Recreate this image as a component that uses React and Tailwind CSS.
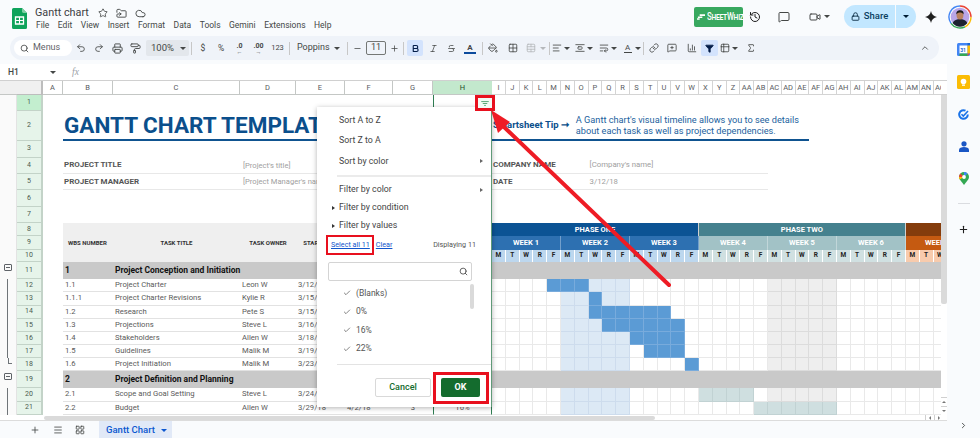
import React from 'react';
import {
  Star, Cloud, History, MessageSquare, Video, Lock, Search, Undo2, Redo2, Printer, PaintRoller, Italic, Strikethrough,
  PaintBucket, Grid2x2, TableCellsMerge, AlignLeft, Link, MessageSquarePlus, ChartColumn, Sigma, ChevronUp, ChevronRight,
  Plus, Menu, Minus, FolderSymlink, Check, WrapText, AlignVerticalSpaceAround, Funnel, Table2, LayoutGrid, Bold,
} from 'lucide-react';

const GRID = 'grid grid-cols-[17px_26px_20px_50px_127px_56px_49px_48px_40px_59px_repeat(33,13.8px)]';

const Caret = ({ c = 'border-t-[#444746]' }) => (
  <span className={`inline-block h-0 w-0 border-x-[3px] border-t-[3px] border-x-transparent ${c}`} />
);

const T = ({ children, w = 'w-[18px]', cls = '' }) => (
  <span className={`flex h-4 shrink-0 items-center justify-center text-[#444746] ${w} ${cls}`}>{children}</span>
);

const Sep = ({ cls = '' }) => <span className={`h-[13px] w-px shrink-0 bg-[#c7c7c7] ${cls}`} />;

function SheetsLogo() {
  return (
    <svg width="15" height="21" viewBox="0 0 15 21">
      <path d="M1.5 0H10l5 5v14.5a1.5 1.5 0 0 1-1.5 1.5h-12A1.5 1.5 0 0 1 0 19.5v-18A1.5 1.5 0 0 1 1.5 0z" fill="#0fa35b" />
      <path d="M10 0l5 5h-3.6A1.4 1.4 0 0 1 10 3.6z" fill="#7fd0a3" />
      <path d="M3.5 9h8v7h-8z" fill="none" stroke="#fff" strokeWidth="1.3" />
      <path d="M3.5 12.5h8M7.5 9v7" stroke="#fff" strokeWidth="1.1" />
    </svg>
  );
}

function Avatar() {
  return (
    <svg width="24" height="24" viewBox="0 0 24 24">
      <path d="M12 1a11 11 0 0 1 11 11" fill="none" stroke="#ea4335" strokeWidth="1.4" />
      <path d="M23 12a11 11 0 0 1-6 9.8" fill="none" stroke="#fbbc04" strokeWidth="1.4" />
      <path d="M17 21.8A11 11 0 0 1 3 18.3" fill="none" stroke="#34a853" strokeWidth="1.4" />
      <path d="M3 18.3A11 11 0 0 1 12 1" fill="none" stroke="#4285f4" strokeWidth="1.4" />
      <circle cx="12" cy="12" r="9.3" fill="#b9a6e8" />
      <path d="M4.6 18c1.6-3 4.2-4 7.4-4s5.8 1 7.4 4a9.3 9.3 0 0 1-14.8 0z" fill="#1d2230" />
      <ellipse cx="12" cy="10.5" rx="3.4" ry="4.1" fill="#b9825f" />
      <path d="M8.4 9.5C8 6.5 10 5.3 12.2 5.3c2.3 0 3.8 1.3 3.4 4.2-.9-1.5-2.2-1.9-3.6-1.9-1.400 0-2.800.5-3.600 1.900z" fill="#1b1b1b" />
    </svg>
  );
}

const TitleBar = () => (
  <div className="flex h-[36px] shrink-0 items-start">
    <div className="ml-[12px] mt-[8px]"><SheetsLogo /></div>
    <div className="ml-[8px] mt-[6px] flex flex-col">
      <div className="flex h-[14px] items-center">
        <span className="w-[63px] whitespace-nowrap text-[10.800px] leading-none text-[#3c4043]">Gantt chart</span>
        <Star size={10} className="text-[#444746]" />
        <FolderSymlink size={11} className="ml-[8px] text-[#444746]" />
        <Cloud size={11} className="ml-[8px] text-[#444746]" />
      </div>
      <div className="flex h-[11px] items-center gap-[8.5px] pl-px text-[8.500px] leading-none text-[#444746]">
        {['File', 'Edit', 'View', 'Insert', 'Format', 'Data', 'Tools', 'Gemini', 'Extensions', 'Help'].map((m) => (
          <span key={m}>{m}</span>
        ))}
      </div>
    </div>
    <div className="ml-auto mt-[5px] flex h-[23px] items-center pr-[8px]">
      <div className="flex h-[20px] w-[49px] items-center gap-[2px] overflow-hidden rounded-[2px] bg-[#38a85f] pl-[3px]">
        <svg className="shrink-0" width="8" height="6" viewBox="0 0 9 6"><path d="M3 0h6v2H3zM1 2.500h5v1.500H1zM0 4.500h3V6H0z" fill="#fff" /></svg>
        <span className="inline-block w-[33px] origin-left scale-x-[0.78] whitespace-nowrap text-[10px] font-medium leading-none tracking-[-0.3px] text-white [font-variant:small-caps]">SheetWhiz</span>
      </div>
      <History size={12} strokeWidth={2} className="ml-[6px] text-[#1f1f1f]" />
      <MessageSquare size={12} strokeWidth={2} className="ml-[17px] text-[#444746]" />
      <Video size={12} strokeWidth={2} className="ml-[19px] text-[#444746]" />
      <span className="ml-[3px] flex"><Caret /></span>
      <div className="ml-[14px] flex h-[23px] w-[72px] items-center rounded-full bg-[#c2e7ff]">
        <div className="flex h-full w-[52px] items-center justify-center gap-[4px] border-r border-[#f9fbfd] text-[9.500px] font-medium text-[#0b3f5f]">
          <Lock size={9} strokeWidth={2.400} className="text-[#0b2e45]" />
          <span>Share</span>
        </div>
        <span className="ml-[7px] flex"><Caret c="border-t-[#001d35]" /></span>
      </div>
      <svg width="12" height="12" viewBox="0 0 12 12" className="ml-[9px]"><path d="M6 0c.5 3.200 2.800 5.500 6 6-3.200.5-5.500 2.800-6 6-.5-3.200-2.800-5.500-6-6 3.200-.5 5.500-2.800 6-6z" fill="#1f1f1f" /></svg>
      <span className="ml-[11px] flex"><Avatar /></span>
    </div>
  </div>
);

const Toolbar = () => (
  <div className="ml-[10px] flex h-[24px] w-[929px] shrink-0 items-center rounded-full bg-[#eff3f9] pl-[4px] text-[8.500px] text-[#444746]">
    <div className="flex h-4 w-[58px] shrink-0 items-center gap-[4px] rounded-full bg-white pl-[6px] text-[9px] text-[#5f6368]">
      <Search size={9} strokeWidth={2.200} className="text-[#444746]" />
      <span>Menus</span>
    </div>
    <T><Undo2 size={10} /></T>
    <T><Redo2 size={10} /></T>
    <T><Printer size={11} /></T>
    <T><PaintRoller size={11} /></T>
    <div className="ml-[2px] flex h-4 w-[43px] shrink-0 items-center gap-[6px] rounded-[2px] bg-[#e3e7ec] pl-[5px] text-[9.500px]">
      <span>100%</span><Caret />
    </div>
    <Sep cls="ml-[2px]" />
    <T cls="ml-[2px]">$</T>
    <T>%</T>
    <T w="w-[19px]"><span className="flex flex-col items-center text-[7px] font-bold leading-[7px]">.0<span className="text-[6px] leading-[3px]">←</span></span></T>
    <T w="w-[19px]"><span className="flex flex-col items-center text-[7px] font-bold leading-[7px]">.00<span className="text-[6px] leading-[3px]">→</span></span></T>
    <T w="w-[19px]"><span className="text-[7.500px]">123</span></T>
    <Sep cls="ml-[2px]" />
    <span className="ml-[7px] w-[37px] shrink-0 text-[9px]">Poppins</span>
    <Caret />
    <Sep cls="ml-[7px]" />
    <T><Minus size={9} /></T>
    <span className="flex h-[14px] w-[20px] shrink-0 items-center justify-center rounded-[2px] border border-[#747775] text-[9px]">11</span>
    <T w="w-[17px]"><Plus size={9} /></T>
    <Sep />
    <span className="ml-[3px] flex h-4 w-[16px] shrink-0 items-center justify-center rounded-[2px] bg-[#d3e3fd] text-[#041e49]"><Bold size={9} strokeWidth={3} /></span>
    <T cls="ml-[1px]"><Italic size={9} /></T>
    <T><Strikethrough size={9} /></T>
    <T cls="ml-[1px]"><span className="flex flex-col items-center text-[8px] font-bold leading-[9px]">A<span className="block h-[2px] w-[12px] bg-[#0b4a9c]" /></span></T>
    <Sep cls="ml-[3px]" />
    <T cls="ml-[1px]"><PaintBucket size={10} /></T>
    <T cls="ml-[2px]"><Grid2x2 size={10} /></T>
    <T><TableCellsMerge size={10} className="text-[#b5b8bb]" /></T>
    <Caret c="border-t-[#b5b8bb]" />
    <Sep cls="ml-[3px]" />
    <T w="w-[14px]"><AlignLeft size={10} /></T>
    <Caret />
    <T w="w-[15px]" cls="ml-[2px]"><AlignVerticalSpaceAround size={10} /></T>
    <Caret />
    <T w="w-[15px]" cls="ml-[3px]"><WrapText size={10} /></T>
    <Caret />
    <T w="w-[15px]" cls="ml-[3px]"><span className="flex flex-col items-center text-[8px] leading-[8px]">A<span className="block h-px w-[8px] bg-[#444746]" /></span></T>
    <Caret />
    <Sep cls="ml-[2px]" />
    <T cls="ml-[1px]"><Link size={10} /></T>
    <T><MessageSquarePlus size={10} /></T>
    <T cls="ml-[2px]"><ChartColumn size={10} /></T>
    <span className="flex h-4 w-[17px] shrink-0 items-center justify-center rounded-[2px] bg-[#d3e3fd]"><Funnel size={9} fill="#041e49" className="text-[#041e49]" /></span>
    <T w="w-[14px]"><Table2 size={10} /></T>
    <Caret />
    <T w="w-[16px]" cls="ml-[5px]"><Sigma size={10} /></T>
    <T cls="ml-[157px]"><ChevronUp size={10} /></T>
  </div>
);

const FormulaBar = () => (
  <div className="mt-[4px] flex h-[17px] shrink-0 items-center border-b border-[#d0d0d0] bg-white text-[8.500px] text-[#444746]">
    <span className="ml-[8px] w-[42px] font-medium">H1</span>
    <Caret />
    <span className="ml-[16px] text-[9.500px] italic text-[#9aa0a6] [font-family:'Liberation_Serif',serif]">fx</span>
  </div>
);

const LETTERS = ['I','J','K','L','M','N','O','P','Q','R','S','T','U','V','W','X','Y','Z','AA','AB','AC','AD','AE','AF','AG','AH','AI','AJ','AK','AL','AM','AN','AO'];

const ColHeader = () => (
  <div className={`${GRID} h-[14px] bg-[#f8f9fa] text-[7.500px] leading-none text-[#575a5e]`}>
    <div className="border-b border-[#c4c7c5] bg-[#f0f0f0]" />
    <div className="border-b border-r-[2px] border-[#bdbdbd] bg-[#f0f0f0]" />
    {['A', 'B', 'C', 'D', 'E', 'F', 'G'].map((l) => (
      <div key={l} className="flex items-center justify-center border-b border-r border-[#c4c7c5] bg-white">{l}</div>
    ))}
    <div className="flex items-center justify-center border-b border-[#c4c7c5] bg-[#c3e8cd] text-[#1e4d2b]">H</div>
    {LETTERS.map((l) => (
      <div key={l} className="flex items-center justify-center overflow-hidden border-b border-r border-[#d4d4d4] bg-white">{l}</div>
    ))}
  </div>
);

const Gutter = ({ kind }) => (
  <div className="flex justify-center border-r border-[#e3e3e3] bg-[#fafafa]">
    {kind === 'box' && <span className="mt-[2px] flex h-[7px] w-[8px] items-center justify-center rounded-[1px] border border-[#5f6368]"><span className="h-px w-[4px] bg-[#5f6368]" /></span>}
    {kind === 'line' && <span className="ml-[-1px] h-full w-px bg-[#6f7478]" />}
    {kind === 'end' && <span className="ml-[3px] h-[6px] w-[4px] border-b border-l border-[#6f7478]" />}
  </div>
);

const RowHead = ({ n, sel }) => (
  <div className={`flex items-center justify-center border-b border-r-[2px] border-[#c3d3c8] text-[7px] leading-none text-[#4a5a4f] ${sel ? 'bg-[#c3eecf]' : 'bg-[#e6f4ea]'}`}>{n}</div>
);

const HCell = ({ children, cls = '' }) => (
  <div className={`flex items-center justify-center border-x border-[#2f7d52] ${cls}`}>{children}</div>
);

const Blank = ({ span = 'col-span-33' }) => <div className={`${span} bg-white`} />;

const Row1 = () => (
  <div className={`${GRID} h-[16px]`}>
    <Gutter /><RowHead n={1} sel />
    <div className="col-span-7 bg-white" />
    <HCell cls="bg-white" />
    <Blank />
  </div>
);

const Row2 = () => (
  <div className={`${GRID} h-[30px]`}>
    <Gutter /><RowHead n={2} />
    <div className="bg-white" />
    <div className="col-span-7 flex items-center overflow-hidden whitespace-nowrap border-b-[2px] border-[#0f5390] bg-white pl-px text-[22.500px] font-bold leading-none text-[#0b4f8c]">GANTT CHART TEMPLATE</div>
    <div className="col-span-6 flex items-center whitespace-nowrap border-b-[2px] border-[#0f5390] bg-white pl-px text-[9.500px] font-bold text-[#0b4f8c]">Smartsheet Tip ➞</div>
    <div className="col-span-17 flex flex-col justify-center whitespace-nowrap border-b-[2px] border-[#0f5390] bg-white pl-px text-[9.200px] leading-[11px] text-[#1c5f9e]">
      <span>A Gantt chart's visual timeline allows you to see details</span>
      <span>about each task as well as project dependencies.</span>
    </div>
    <Blank span="col-span-10" />
  </div>
);

const Plain = ({ n, h }) => (
  <div className={`${GRID} ${h}`}>
    <Gutter /><RowHead n={n} />
    <div className="col-span-8 bg-white" />
    <Blank />
  </div>
);

const Info = ({ n, h, a, b, c, d }) => (
  <div className={`${GRID} ${h}`}>
    <Gutter /><RowHead n={n} />
    <div className="bg-white" />
    <div className="col-span-2 flex items-center whitespace-nowrap border-b border-[#e8e8e8] bg-white pl-px text-[8px] font-bold text-[#555]">{a}</div>
    <div className="col-span-5 flex items-center whitespace-nowrap border-b border-[#e8e8e8] bg-white pl-[3px] text-[7.600px] text-[#a0a0a0]">{b}</div>
    <div className="col-span-7 flex items-center whitespace-nowrap border-b border-[#e8e8e8] bg-white pl-px text-[8px] font-bold text-[#555]">{c}</div>
    <div className="col-span-13 flex items-center whitespace-nowrap border-b border-[#e8e8e8] bg-white pl-px text-[7.800px] text-[#a0a0a0]">{d}</div>
    <Blank span="col-span-13" />
  </div>
);

const PhaseRow = () => (
  <div className={`${GRID} h-[13px]`}>
    <Gutter /><RowHead n={8} />
    <div className="bg-white" />
    <div className="col-span-7 bg-[#efefef]" />
    <div className="col-span-15 flex items-center justify-center border-r border-[#d0d0d0] bg-[#0b5394] text-[7.500px] font-bold text-white">PHASE ONE</div>
    <div className="col-span-15 flex items-center justify-center border-r border-[#d0d0d0] bg-[#45818e] text-[7.500px] font-bold text-white">PHASE TWO</div>
    <div className="col-span-3 bg-[#843c0c]" />
  </div>
);

const WeekCell = ({ children, cls }) => (
  <div className={`col-span-5 flex items-center justify-center overflow-hidden whitespace-nowrap border-r border-[#ffffff55] text-[7.500px] font-bold text-white ${cls}`}>{children}</div>
);

const WeekRow = () => (
  <div className={`${GRID} h-[13.500px]`}>
    <Gutter /><RowHead n={9} />
    <div className="bg-white" />
    <div className="flex items-center whitespace-nowrap bg-[#efefef] pl-[5px] text-[6px] font-bold text-[#333]">WBS NUMBER</div>
    <div className="flex items-center justify-center bg-[#efefef] text-[6px] font-bold text-[#333]">TASK TITLE</div>
    <div className="flex items-center justify-center whitespace-nowrap bg-[#efefef] text-[6px] font-bold text-[#333]">TASK OWNER</div>
    <div className="flex items-center justify-center whitespace-nowrap bg-[#efefef] text-[6px] font-bold text-[#333]">START DATE</div>
    <div className="col-span-3 bg-[#efefef]" />
    {['WEEK 1', 'WEEK 2', 'WEEK 3'].map((w) => <WeekCell key={w} cls="bg-[#2d70b1]">{w}</WeekCell>)}
    {['WEEK 4', 'WEEK 5', 'WEEK 6'].map((w) => <WeekCell key={w} cls="bg-[#a2c2c6]">{w}</WeekCell>)}
    <div className="col-span-3 flex items-center overflow-hidden whitespace-nowrap bg-[#c55a11] pl-[19px] text-[7.500px] font-bold text-white">WEEK 7</div>
  </div>
);

const DAYS = ['M', 'T', 'W', 'R', 'F'];

const DayRow = () => (
  <div className={`${GRID} h-[12.500px]`}>
    <Gutter /><RowHead n={10} />
    <div className="bg-white" />
    <div className="col-span-7 bg-[#efefef]" />
    {Array.from({ length: 33 }, (_, i) => (
      <div
        key={i}
        className={`flex items-center justify-center border-r border-white text-[6.500px] font-bold text-[#222] ${i < 15 ? 'bg-[#bdd7ee]' : i < 30 ? 'bg-[#d0e0e1]' : 'bg-[#f8cbad]'}`}
      >
        {DAYS[i % 5]}
      </div>
    ))}
  </div>
);

const Section = ({ n, h, gut, a, b }) => (
  <div className={`${GRID} ${h}`}>
    <Gutter kind={gut} /><RowHead n={n} />
    <div className="bg-white" />
    <div className="flex items-center bg-[#c9c9c9] pl-[2px] text-[8.500px] font-bold text-[#111]">{a}</div>
    <div className="col-span-39 flex items-center whitespace-nowrap bg-[#c9c9c9] pl-[2px] text-[8.500px] font-bold text-[#111]">{b}</div>
  </div>
);

const CELL = {
  w: 'bg-white border-[#e9e9e9]',
  d: 'bg-[#5b9bd5] border-[#78abdc]',
  l: 'bg-[#dce9f5] border-[#cddced]',
  g: 'bg-[#eeeeee] border-[#dcdcdc]',
  t: 'bg-[#cfdfe0] border-[#c1d2d3]',
};

function paint(spec) {
  const out = Array(33).fill('w');
  Object.entries(spec).forEach(([k, ranges]) => {
    ranges.forEach(([a, b]) => {
      for (let i = a; i <= b; i += 1) out[i] = k;
    });
  });
  return out;
}

const Task = ({ n, h, gut, a, b, c, d, e, f, g, spec }) => (
  <div className={`${GRID} ${h}`}>
    <Gutter kind={gut} /><RowHead n={n} />
    <div className="bg-white" />
    {[a, b, c, d, e].map((t, i) => (
      <div key={i} className="flex items-center overflow-hidden whitespace-nowrap border-b-[1.500px] border-[#e2e2e2] bg-white pl-[2px] text-[7.700px] text-[#5a5a5a]">{t}</div>
    ))}
    <div className="flex items-center justify-center border-b-[1.500px] border-[#e2e2e2] bg-white text-[7.700px] text-[#5a5a5a]">{f}</div>
    <HCell cls="border-b-[1.500px] border-b-[#e2e2e2] bg-white text-[7.700px] text-[#5a5a5a]">{g}</HCell>
    {paint(spec).map((k, i) => (
      <div key={i} className={`border-b-[1.500px] border-r-[1.500px] ${CELL[k]}`} />
    ))}
  </div>
);

const Sheet = () => (
  <div className="flex flex-col">
    <ColHeader />
    <Row1 />
    <Row2 />
    <Plain n={3} h="h-[16.500px]" />
    <Info n={4} h="h-[16.500px]" a="PROJECT TITLE" b="[Project's title]" c="COMPANY NAME" d="[Company's name]" />
    <Info n={5} h="h-[16px]" a="PROJECT MANAGER" b="[Project Manager's name]" c="DATE" d="3/12/18" />
    <Plain n={6} h="h-[17px]" />
    <Plain n={7} h="h-[16px]" />
    <PhaseRow />
    <WeekRow />
    <DayRow />
    <Section n={11} h="h-[17px]" gut="box" a="1" b="Project Conception and Initiation" />
    <Task n={12} h="h-[13px]" gut="line" a="1.1" b="Project Charter" c="Leon W" d="3/12/18" spec={{ d: [[4, 6]], l: [[7, 9]], g: [[20, 24]] }} />
    <Task n={13} h="h-[13.500px]" gut="line" a="1.1.1" b="Project Charter Revisions" c="Kylie R" d="3/15/18" spec={{ l: [[5, 6], [8, 9]], d: [[7, 7]], g: [[20, 24]] }} />
    <Task n={14} h="h-[13.500px]" gut="line" a="1.2" b="Research" c="Pete S" d="3/15/18" spec={{ l: [[5, 6]], d: [[7, 12]], g: [[20, 24]] }} />
    <Task n={15} h="h-[13px]" gut="line" a="1.3" b="Projections" c="Steve L" d="3/16/18" spec={{ l: [[5, 7]], d: [[8, 13]], g: [[20, 24]] }} />
    <Task n={16} h="h-[13px]" gut="line" a="1.4" b="Stakeholders" c="Allen W" d="3/18/18" spec={{ l: [[5, 9]], d: [[10, 13]], g: [[20, 24]] }} />
    <Task n={17} h="h-[13px]" gut="line" a="1.5" b="Guidelines" c="Malik M" d="3/19/18" spec={{ l: [[5, 9]], d: [[11, 13]], g: [[20, 24]] }} />
    <Task n={18} h="h-[13px]" gut="end" a="1.6" b="Project Initiation" c="Malik M" d="3/23/18" spec={{ l: [[5, 9]], d: [[14, 14]], g: [[20, 24]] }} />
    <Section n={19} h="h-[17px]" gut="box" a="2" b="Project Definition and Planning" />
    <Task n={20} h="h-[13.500px]" gut="line" a="2.1" b="Scope and Goal Setting" c="Steve L" d="3/24/18" spec={{ l: [[5, 9]], t: [[15, 18]], g: [[20, 24]] }} />
    <Task n={21} h="h-[13px]" gut="line" a="2.2" b="Budget" c="Allen W" d="3/29/18" e="4/2/18" f="3" g="16%" spec={{ l: [[5, 9]], t: [[19, 24]] }} />
  </div>
);

const VScroll = () => (
  <div className="flex w-[6px] shrink-0 flex-col bg-white">
    <div className="h-[14px] border-b border-[#d0d0d0]" />
    <div className="h-[209px] rounded-b-[2px] bg-[#dadada]" />
    <div className="flex-1" />
    <div className="flex h-[9px] items-center justify-center border-t border-[#d0d0d0]"><span className="h-0 w-0 border-x-2 border-b-2 border-x-transparent border-b-[#777]" /></div>
    <div className="flex h-[9px] items-center justify-center border-t border-[#d0d0d0]"><span className="h-0 w-0 border-x-2 border-t-2 border-x-transparent border-t-[#777]" /></div>
  </div>
);

const HScroll = () => (
  <div className="flex h-[6px] shrink-0 items-center border-b border-[#dcdcdc] bg-white">
    <div className="ml-[44px] h-[4px] w-[611px] rounded-full bg-[#dadada]" />
    <span className="ml-[270px] flex h-full w-[9px] items-center justify-center border-l border-[#d0d0d0]"><span className="h-0 w-0 border-y-2 border-r-2 border-y-transparent border-r-[#777]" /></span>
    <span className="flex h-full w-[9px] items-center justify-center border-l border-[#d0d0d0]"><span className="h-0 w-0 border-y-2 border-l-2 border-y-transparent border-l-[#777]" /></span>
  </div>
);

const TabBar = () => (
  <div className="flex h-[18px] shrink-0 items-center text-[#444746]">
    <Plus size={10} className="ml-[30px]" />
    <Menu size={10} className="ml-[13px]" />
    <LayoutGrid size={10} className="ml-[12px]" />
    <div className="ml-[14px] flex h-full w-[73px] items-center gap-[6px] bg-[#e1e9f7] pl-[7px] text-[9.500px] font-medium text-[#0b57d0]">
      <span className="whitespace-nowrap">Gantt Chart</span><Caret c="border-t-[#0b57d0]" />
    </div>
  </div>
);

const Sidebar = () => (
  <div className="flex w-[33px] shrink-0 flex-col items-center pt-[6px]">
    <svg width="13" height="13" viewBox="0 0 13 13" className="mt-[1px]">
      <rect width="13" height="13" rx="1.500" fill="#4285f4" />
      <rect x="2.500" y="2.500" width="8" height="8" fill="#fff" />
      <path d="M10.500 0H13v2.500h-2.500z" fill="#1967d2" />
      <path d="M10.500 2.500H13v8h-2.500z" fill="#fbbc04" />
      <path d="M2.500 10.500h8V13h-8z" fill="#34a853" />
      <path d="M10.500 10.500H13L10.500 13z" fill="#ea4335" />
      <text x="3.200" y="9" fontSize="5" fill="#1967d2" fontWeight="700">31</text>
    </svg>
    <svg width="13" height="14" viewBox="0 0 13 14" className="mt-[19px]">
      <rect width="13" height="14" rx="1.500" fill="#fbbc04" />
      <circle cx="6.500" cy="6.500" r="2.800" fill="#fff" />
      <rect x="5" y="9.500" width="3" height="1.300" fill="#fff" />
    </svg>
    <svg width="11" height="11" viewBox="0 0 11 11" className="mt-[20px]">
      <path d="M9.800 5.500A4.300 4.300 0 1 1 7.500 1.700" fill="none" stroke="#1a73e8" strokeWidth="2" />
      <path d="M3.500 5.300l1.800 1.800L10 2" fill="none" stroke="#1a73e8" strokeWidth="1.600" />
    </svg>
    <svg width="10" height="11" viewBox="0 0 10 11" className="mt-[21px]">
      <circle cx="5" cy="2.800" r="2.600" fill="#1a56c4" />
      <path d="M0 11V9c0-2 2.500-2.900 5-2.900S10 7 10 9v2z" fill="#1a56c4" />
    </svg>
    <svg width="10" height="13" viewBox="0 0 10 13" className="mt-[20px]">
      <path d="M5 0a5 5 0 0 1 5 5c0 1-.3 1.800-.8 2.600L5 13 .8 7.600A4.700 4.700 0 0 1 0 5a5 5 0 0 1 5-5z" fill="#34a853" />
      <path d="M5 0a5 5 0 0 1 3.500 1.400L5 5z" fill="#4285f4" />
      <path d="M0 5a5 5 0 0 1 1.500-3.500L5 5z" fill="#ea4335" />
      <path d="M0 5l5 0-4.200 2.600A4.700 4.700 0 0 1 0 5z" fill="#fbbc04" />
      <circle cx="5" cy="5" r="1.900" fill="#fff" />
    </svg>
    <div className="mt-[18px] h-px w-[12px] bg-[#dadce0]" />
    <Plus size={11} strokeWidth={2.400} className="mt-[20px] text-[#1f1f1f]" />
    <ChevronRight size={9} strokeWidth={2.400} className="mt-auto mb-[8px] text-[#444746]" />
  </div>
);

const Item = ({ h, label, arrow, tri }) => (
  <div className={`flex items-center pl-[22px] pr-[8px] text-[8.800px] text-[#444] ${h}`}>
    {tri && <span className="ml-[-7px] mr-[4px] h-0 w-0 border-y-[2.500px] border-l-[3px] border-y-transparent border-l-[#333]" />}
    <span>{label}</span>
    {arrow && <span className="ml-auto h-0 w-0 border-y-[2.500px] border-l-[3.500px] border-y-transparent border-l-[#666]" />}
  </div>
);

const Val = ({ label }) => (
  <div className="flex h-[18.500px] items-center pl-[26px] text-[8.500px] text-[#555]">
    <Check size={8} strokeWidth={1.800} className="text-[#333]" />
    <span className="ml-[5px]">{label}</span>
  </div>
);

const FilterMenu = () => (
  <div className="absolute left-[317px] top-[107px] flex h-[300px] w-[175px] flex-col border-r border-[#5f9a78] bg-white shadow-[0_1px_5px_rgba(0,0,0,0.3)]">
    <Item h="mt-[4px] h-[20px]" label="Sort A to Z" />
    <Item h="h-[20px]" label="Sort Z to A" />
    <Item h="h-[20.500px]" label="Sort by color" arrow />
    <div className="ml-[20px] mt-[3px] h-[2px] bg-[#ebebeb]" />
    <Item h="mt-[3.500px] h-[19px]" label="Filter by color" arrow />
    <Item h="h-[18px]" label="Filter by condition" tri />
    <Item h="h-[18px]" label="Filter by values" tri />
    <div className="flex h-[20px] items-center pl-[14px] pr-[15px] text-[7.200px]">
      <span className="text-[#1155cc] underline">Select all 11</span>
      <span className="ml-[6px] text-[#1155cc] underline">Clear</span>
      <span className="ml-auto text-[#555]">Displaying 11</span>
    </div>
    <div className="ml-[11px] mt-[7px] flex h-[19px] w-[144px] items-center justify-end rounded-[2px] border border-[#d4d4d4] pr-[3px]">
      <Search size={9} strokeWidth={2.200} className="text-[#444]" />
    </div>
    <div className="relative mt-[2px] flex h-[75px] flex-col pt-[1px]">
      <Val label="(Blanks)" />
      <Val label="0%" />
      <Val label="16%" />
      <Val label="22%" />
      <div className="absolute left-[153px] top-[1px] h-[25px] w-[4px] rounded-full bg-[#dadada]" />
    </div>
    <div className="ml-[20px] mt-[6px] h-px bg-[#e3e3e3]" />
    <div className="mt-[13px] flex items-center">
      <span className="ml-[58px] flex h-[19px] w-[56px] items-center justify-center rounded-[2px] border border-[#d9d9d9] text-[9px] font-medium text-[#146c2e]">Cancel</span>
      <span className="ml-[10px] flex h-[19px] w-[39px] items-center justify-center rounded-[2px] bg-[#146c2e] text-[9px] font-bold text-white">OK</span>
    </div>
  </div>
);

const Marks = () => (
  <>
    <div className="absolute left-[475px] top-[95px] flex h-[16px] w-[20px] items-center justify-center border-[3px] border-[#e8101e] bg-[#f3faf5]">
      <svg width="8" height="5" viewBox="0 0 9 6"><path d="M0 .7h9M1.800 3h5.400M3.500 5.300h2" stroke="#5aa877" strokeWidth="1.200" /></svg>
    </div>
    <div className="absolute left-[326px] top-[235px] h-[20px] w-[48px] border-[2.500px] border-[#e8101e]" />
    <div className="absolute left-[433px] top-[372px] h-[32px] w-[56px] border-[3px] border-[#e8101e]" />
    <svg className="pointer-events-none absolute left-0 top-0" width="980" height="438" viewBox="0 0 980 438">
      <path d="M669 285L503 126" stroke="#ee1c25" strokeWidth="4" strokeLinecap="round" />
      <path d="M491 110L510 122L498 133z" fill="#ee1c25" />
    </svg>
  </>
);

export default function App() {
  return (
    <div className="relative flex h-[438px] w-[980px] flex-col overflow-hidden bg-[#f9fbfd] [font-family:Roboto,sans-serif]">
      <TitleBar />
      <div className="flex min-h-0 flex-1">
        <div className="flex w-[947px] shrink-0 flex-col">
          <Toolbar />
          <FormulaBar />
          <div className="flex h-[334px] shrink-0 overflow-hidden">
            <div className="w-[941px] shrink-0 overflow-hidden"><Sheet /></div>
            <VScroll />
          </div>
          <HScroll />
          <TabBar />
        </div>
        <Sidebar />
      </div>
      <FilterMenu />
      <Marks />
    </div>
  );
}
